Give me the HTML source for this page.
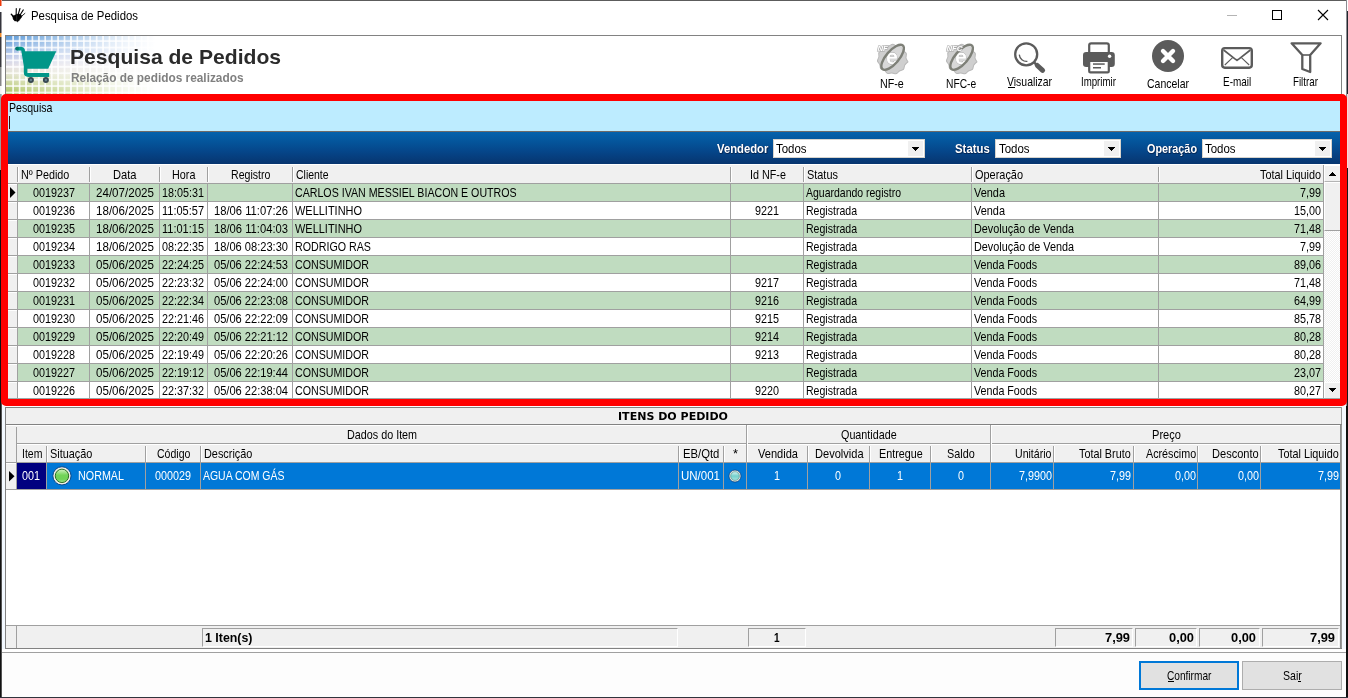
<!DOCTYPE html>
<html lang="pt-BR"><head><meta charset="utf-8"><title>Pesquisa de Pedidos</title>
<style>
html,body{margin:0;padding:0;background:#fff;overflow:hidden}
#w{position:relative;width:1348px;height:698px;overflow:hidden;font-family:"Liberation Sans",sans-serif}
#w>div,#w>span,#w>svg{position:absolute}
#tx{left:0;top:0;width:1348px;height:698px;will-change:transform}
#tx>span{position:absolute;white-space:pre;transform-origin:0 0;color:#000}
.t{font:13px/15px "Liberation Sans",sans-serif}
.tb{font:bold 13px/15px "Liberation Sans",sans-serif}
.tt{font:12px/15px "Liberation Sans",sans-serif}
.h1{font:bold 21px/24px "Liberation Sans",sans-serif}
.h2{font:bold 12px/14px "Liberation Sans",sans-serif}
.dj{font:bold 11px/13px "DejaVu Sans","Liberation Sans",sans-serif}
</style></head>
<body><div id="w">
<div style="left:0px;top:0px;width:1348px;height:698px;background:#ffffff;"></div>
<div style="left:0px;top:0px;width:1px;height:6px;background:#ee3a0c;"></div>
<div style="left:1px;top:0px;width:1px;height:6px;background:#f69c85;"></div>
<div style="left:0px;top:6px;width:1px;height:6px;background:#ffffff;"></div>
<div style="left:1px;top:6px;width:1px;height:6px;background:#ffffff;"></div>
<div style="left:0px;top:12px;width:1px;height:21px;background:#34343c;"></div>
<div style="left:1px;top:12px;width:1px;height:21px;background:#99999d;"></div>
<div style="left:0px;top:33px;width:1px;height:4px;background:#f08a28;"></div>
<div style="left:1px;top:33px;width:1px;height:4px;background:#f7c493;"></div>
<div style="left:0px;top:37px;width:1px;height:30px;background:#38383e;"></div>
<div style="left:1px;top:37px;width:1px;height:30px;background:#9b9b9e;"></div>
<div style="left:0px;top:67px;width:1px;height:19px;background:#868686;"></div>
<div style="left:1px;top:67px;width:1px;height:19px;background:#c2c2c2;"></div>
<div style="left:0px;top:86px;width:1px;height:8px;background:#f4f4f4;"></div>
<div style="left:1px;top:86px;width:1px;height:8px;background:#f9f9f9;"></div>
<div style="left:0px;top:94px;width:1px;height:76px;background:#9a9a9a;"></div>
<div style="left:1px;top:94px;width:1px;height:76px;background:#b6b6b6;"></div>
<div style="left:0px;top:170px;width:1px;height:528px;background:#111111;"></div>
<div style="left:1px;top:170px;width:1px;height:528px;background:#535353;"></div>
<div style="left:2px;top:0px;width:1345px;height:1px;background:#5c5c5c;"></div>
<div style="left:1346px;top:0px;width:1px;height:698px;background:#8c8c92;"></div>
<div style="left:1347px;top:0px;width:1px;height:11px;background:#ffffff;"></div>
<div style="left:1347px;top:11px;width:1px;height:83px;background:#23272e;"></div>
<div style="left:1347px;top:94px;width:1px;height:74px;background:#f4dada;"></div>
<div style="left:1347px;top:168px;width:1px;height:530px;background:#15171c;"></div>
<div style="left:1346px;top:406px;width:2px;height:292px;background:#101010;"></div>
<div style="left:0px;top:697px;width:1348px;height:1px;background:#30343c;"></div>
<div style="left:2px;top:406px;width:1344px;height:291px;background:#fdfdfd;"></div>
<div style="left:2px;top:406px;width:3px;height:243px;background:#f2f8ff;"></div>
<div style="left:1342px;top:406px;width:4px;height:243px;background:#f4f9ff;"></div>
<svg style="left:6px;top:4px" width="26" height="22" viewBox="6 4 26 22"><g fill="#000" stroke="#000" stroke-linecap="round">
<path d="M12.8 16.2 Q13.8 15.6 15.4 15 Q17 14.2 18.6 14.1 Q20 14 20.9 14.7 Q21.9 15.6 21.8 16.7 Q21.2 18 20.1 19 Q19.4 20.4 18.5 21.1 Q17.6 22 17 21.7 Q16.6 21.2 16.3 20.7 Q15.4 21.2 14.5 20.7 Q13.6 20 13.2 19 Q12.8 17.6 12.8 16.2Z" stroke-width=".5"/>
<path d="M13.6 16.8 L11.3 14.3" stroke-width="1.35" fill="none"/>
<path d="M16.15 15.2 L16.27 8.5" stroke-width="1.1" fill="none"/>
<path d="M18.1 14.6 L20 8.5" stroke-width="1.1" fill="none"/>
<path d="M20.2 14.8 L23.3 9.9" stroke-width="1.05" fill="none"/>
<path d="M21.4 16.4 L24.9 13.4" stroke-width=".85" fill="none"/>
</g><path d="M16.65 15.3 V20.4" stroke="#666" stroke-width=".35" fill="none"/></svg>
<div style="left:1227px;top:15px;width:10px;height:1px;background:#b4b4b4;"></div>
<div style="left:1272px;top:10px;width:10px;height:10px;background:transparent;box-sizing:border-box;border:1px solid #000"></div>
<svg style="left:1317px;top:9px" width="12" height="12" viewBox="0 0 12 12"><path d="M1 1 L11 11 M11 1 L1 11" stroke="#000" stroke-width="1.1" fill="none"/></svg>
<div style="left:5px;top:35px;width:1337px;height:61px;background:#ffffff;box-sizing:border-box;border:1px solid #828282"></div>
<div style="left:6px;top:36px;width:150px;height:58px;background:
linear-gradient(to right, rgba(255,255,255,0) 0%, rgba(255,255,255,.3) 25%, rgba(255,255,255,.62) 55%, rgba(255,255,255,.88) 80%, rgba(255,255,255,1) 100%),
repeating-linear-gradient(to right, rgba(255,255,255,0) 0px, rgba(255,255,255,0) 3.9px, rgba(255,255,255,.82) 4.7px, rgba(255,255,255,.82) 5.7px, rgba(255,255,255,0) 6.42px) 1.7px 0 no-repeat,
repeating-linear-gradient(to bottom, rgba(255,255,255,0) 0px, rgba(255,255,255,0) 3.9px, rgba(255,255,255,.82) 4.7px, rgba(255,255,255,.82) 5.7px, rgba(255,255,255,0) 6.42px) 0 -0.1px,
linear-gradient(to bottom, #5b9ad8 0%, #93b7e4 18%, #c3cdea 36%, #e6e1e6 52%, #e3e4cf 66%, #c6d392 84%, #a9c25c 100%);"></div>
<svg style="left:10px;top:42px" width="52" height="46" viewBox="10 42 52 46">
<path d="M17 48.6 H21.2 Q22.6 48.6 23 50 L25.6 66 V72.5 Q25.6 75 28.2 75 H49" fill="none" stroke="#009688" stroke-width="3.6" stroke-linejoin="round"/>
<path d="M22.6 51.2 H56.3 L48.2 68.8 H25.6 Z" fill="#009688"/>
<rect x="27.6" y="73" width="21.6" height="3.9" fill="#009688"/>
<circle cx="17" cy="48.6" r="1.9" fill="#00796b"/>
<circle cx="30.9" cy="80" r="3" fill="#37474f"/><circle cx="30.9" cy="80" r="1.2" fill="#607d8b"/>
<circle cx="45.9" cy="80" r="3" fill="#37474f"/><circle cx="45.9" cy="80" r="1.2" fill="#607d8b"/>
</svg>
<svg style="left:874px;top:42px;will-change:transform" width="36" height="36" viewBox="0 0 36 36">
<g transform="translate(18.4,17.2) rotate(10)">
<path d="M15.80 0.00 Q15.80 0.00 14.23 1.86 Q12.67 3.72 12.98 6.13 Q13.29 8.54 10.97 9.26 Q8.64 9.98 7.60 12.17 Q6.56 14.37 4.22 13.72 Q1.88 13.07 -0.19 14.35 Q-2.25 15.64 -3.87 13.82 Q-5.48 12.01 -7.92 11.97 Q-10.35 11.94 -10.73 9.54 Q-11.10 7.14 -13.13 5.79 Q-15.16 4.45 -14.18 2.23 Q-13.20 0.00 -14.18 -2.23 Q-15.16 -4.45 -13.13 -5.79 Q-11.10 -7.14 -10.73 -9.54 Q-10.35 -11.94 -7.92 -11.97 Q-5.48 -12.01 -3.87 -13.82 Q-2.25 -15.64 -0.19 -14.35 Q1.88 -13.07 4.22 -13.72 Q6.56 -14.37 7.60 -12.17 Q8.64 -9.98 10.97 -9.26 Q13.29 -8.54 12.98 -6.13 Q12.67 -3.72 14.23 -1.86Z" fill="#cfcfcf" stroke="#b9b9b9" stroke-width="1"/>
</g>
<ellipse cx="18.6" cy="15.3" rx="5.6" ry="14.8" transform="rotate(40.6 18.6 15.3)" fill="#dedede" opacity=".6"/>
<text x="12.5" y="21.9" font-family="Liberation Sans, sans-serif" font-size="20" fill="#ffffff" stroke="#a9a9a9" stroke-width="1.3" paint-order="stroke">e</text>
<text x="12.5" y="21.9" font-family="Liberation Sans, sans-serif" font-size="20" fill="#ffffff" stroke="#ffffff" stroke-width=".5">e</text>
<ellipse cx="18.6" cy="15.3" rx="6.4" ry="15.6" transform="rotate(40.6 18.6 15.3)" fill="none" stroke="#7e8078" stroke-width="2.4"/>
<text x="3.4" y="8.7" font-family="Liberation Sans, sans-serif" font-weight="bold" font-style="italic" font-size="7.8" fill="#ffffff" stroke="#a8a8a8" stroke-width="1.2" paint-order="stroke">NF</text>
</svg>
<svg style="left:943px;top:42px;will-change:transform" width="36" height="36" viewBox="0 0 36 36">
<g transform="translate(18.4,17.2) rotate(10)">
<path d="M15.80 0.00 Q15.80 0.00 14.23 1.86 Q12.67 3.72 12.98 6.13 Q13.29 8.54 10.97 9.26 Q8.64 9.98 7.60 12.17 Q6.56 14.37 4.22 13.72 Q1.88 13.07 -0.19 14.35 Q-2.25 15.64 -3.87 13.82 Q-5.48 12.01 -7.92 11.97 Q-10.35 11.94 -10.73 9.54 Q-11.10 7.14 -13.13 5.79 Q-15.16 4.45 -14.18 2.23 Q-13.20 0.00 -14.18 -2.23 Q-15.16 -4.45 -13.13 -5.79 Q-11.10 -7.14 -10.73 -9.54 Q-10.35 -11.94 -7.92 -11.97 Q-5.48 -12.01 -3.87 -13.82 Q-2.25 -15.64 -0.19 -14.35 Q1.88 -13.07 4.22 -13.72 Q6.56 -14.37 7.60 -12.17 Q8.64 -9.98 10.97 -9.26 Q13.29 -8.54 12.98 -6.13 Q12.67 -3.72 14.23 -1.86Z" fill="#cfcfcf" stroke="#b9b9b9" stroke-width="1"/>
</g>
<ellipse cx="18.6" cy="15.3" rx="5.6" ry="14.8" transform="rotate(40.6 18.6 15.3)" fill="#dedede" opacity=".6"/>
<text x="12.5" y="21.9" font-family="Liberation Sans, sans-serif" font-size="20" fill="#ffffff" stroke="#a9a9a9" stroke-width="1.3" paint-order="stroke">e</text>
<text x="12.5" y="21.9" font-family="Liberation Sans, sans-serif" font-size="20" fill="#ffffff" stroke="#ffffff" stroke-width=".5">e</text>
<ellipse cx="18.6" cy="15.3" rx="6.4" ry="15.6" transform="rotate(40.6 18.6 15.3)" fill="none" stroke="#7e8078" stroke-width="2.4"/>
<text x="3.4" y="8.7" font-family="Liberation Sans, sans-serif" font-weight="bold" font-style="italic" font-size="7.8" fill="#ffffff" stroke="#a8a8a8" stroke-width="1.2" paint-order="stroke">NFC</text>
</svg>
<svg style="left:1010px;top:38px" width="40" height="38" viewBox="1010 38 40 38">
<circle cx="1026.2" cy="54.3" r="11" fill="none" stroke="#5b5b5b" stroke-width="2.3"/>
<path d="M1019.3 54.6 A7.2 7.2 0 0 0 1027.4 61.3" fill="none" stroke="#5b5b5b" stroke-width="1.3"/>
<path d="M1034.3 62.6 L1036.6 64.9" stroke="#5b5b5b" stroke-width="2.6" fill="none"/>
<path d="M1037.3 65.5 L1042.6 70.3" stroke="#5b5b5b" stroke-width="5" stroke-linecap="round" fill="none"/>
</svg>
<div style="left:1008px;top:87px;width:7px;height:1px;background:#000;"></div>
<svg style="left:1080px;top:38px" width="38" height="38" viewBox="1080 38 38 38">
<rect x="1089.2" y="43.3" width="19.6" height="12" rx="2" fill="#fff" stroke="#5b5b5b" stroke-width="2.2"/>
<rect x="1083" y="52" width="31.8" height="15" rx="3.2" fill="#5b5b5b"/>
<rect x="1089.2" y="60.8" width="19.6" height="11.6" rx="1.2" fill="#fff" stroke="#5b5b5b" stroke-width="2.2"/>
<rect x="1093" y="63.3" width="11.7" height="1.5" fill="#5b5b5b"/><rect x="1093" y="67" width="8" height="1.5" fill="#5b5b5b"/>
<circle cx="1109.6" cy="56.2" r="1.7" fill="#fff"/>
</svg>
<svg style="left:1150px;top:38px" width="36" height="36" viewBox="1150 38 36 36">
<circle cx="1168" cy="56" r="16" fill="#5b5b5b"/>
<path d="M1163 51 L1173 61 M1173 51 L1163 61" stroke="#fff" stroke-width="4.4" stroke-linecap="round" fill="none"/>
</svg>
<svg style="left:1218px;top:44px" width="38" height="28" viewBox="1218 44 38 28">
<rect x="1222.2" y="48.1" width="29.6" height="19.6" rx="2.6" fill="#fff" stroke="#5b5b5b" stroke-width="2.4"/>
<path d="M1223.6 50 L1234.6 58.6 L1237 60.3 L1239.4 58.6 L1250.4 50" fill="none" stroke="#5b5b5b" stroke-width="1.7" stroke-linejoin="round"/>
<path d="M1224.8 65 L1232.6 57.6 M1249.2 65 L1241.4 57.6" fill="none" stroke="#5b5b5b" stroke-width="1.1"/>
</svg>
<svg style="left:1286px;top:38px" width="40" height="38" viewBox="1286 38 40 38">
<path d="M1291.6 43.3 H1320.6 L1310.2 55 V72 L1302.3 69 V55 Z" fill="#fff" stroke="#5b5b5b" stroke-width="2.3" stroke-linejoin="round"/>
<path d="M1302.3 55 H1310.2" stroke="#5b5b5b" stroke-width="1.6"/>
</svg>
<div style="left:8px;top:101px;width:1332px;height:30px;background:#bdecff;"></div>
<div style="left:9px;top:116px;width:1px;height:13px;background:#3a1010;"></div>
<div style="left:8px;top:131px;width:1332px;height:1px;background:#6e6a68;"></div>
<div style="left:8px;top:132px;width:1332px;height:32px;background:linear-gradient(to bottom,#0562ac 0%,#04559b 30%,#05468a 60%,#07356f 100%);"></div>
<div style="left:773px;top:139px;width:152px;height:19px;background:#ffffff;box-sizing:border-box;border:1px solid #d8d4cc"></div>
<div style="left:908px;top:141px;width:15px;height:15px;background:#f0f0f0;"></div>
<div style="left:912px;top:147px;width:7px;height:1px;background:#000;"></div>
<div style="left:913px;top:148px;width:5px;height:1px;background:#000;"></div>
<div style="left:914px;top:149px;width:3px;height:1px;background:#000;"></div>
<div style="left:915px;top:150px;width:1px;height:1px;background:#000;"></div>
<div style="left:995px;top:139px;width:126px;height:19px;background:#ffffff;box-sizing:border-box;border:1px solid #d8d4cc"></div>
<div style="left:1104px;top:141px;width:15px;height:15px;background:#f0f0f0;"></div>
<div style="left:1108px;top:147px;width:7px;height:1px;background:#000;"></div>
<div style="left:1109px;top:148px;width:5px;height:1px;background:#000;"></div>
<div style="left:1110px;top:149px;width:3px;height:1px;background:#000;"></div>
<div style="left:1111px;top:150px;width:1px;height:1px;background:#000;"></div>
<div style="left:1202px;top:139px;width:130px;height:19px;background:#ffffff;box-sizing:border-box;border:1px solid #d8d4cc"></div>
<div style="left:1315px;top:141px;width:15px;height:15px;background:#f0f0f0;"></div>
<div style="left:1319px;top:147px;width:7px;height:1px;background:#000;"></div>
<div style="left:1320px;top:148px;width:5px;height:1px;background:#000;"></div>
<div style="left:1321px;top:149px;width:3px;height:1px;background:#000;"></div>
<div style="left:1322px;top:150px;width:1px;height:1px;background:#000;"></div>
<div style="left:8px;top:164px;width:1332px;height:235px;background:#ffffff;"></div>
<div style="left:8px;top:164px;width:1316px;height:19px;background:#f0f0f0;"></div>
<div style="left:8px;top:164px;width:1316px;height:1px;background:#ffffff;"></div>
<div style="left:17px;top:167px;width:1px;height:15px;background:#a0a0a0;"></div>
<div style="left:18px;top:167px;width:1px;height:15px;background:#ffffff;"></div>
<div style="left:89px;top:167px;width:1px;height:15px;background:#a0a0a0;"></div>
<div style="left:90px;top:167px;width:1px;height:15px;background:#ffffff;"></div>
<div style="left:159px;top:167px;width:1px;height:15px;background:#a0a0a0;"></div>
<div style="left:160px;top:167px;width:1px;height:15px;background:#ffffff;"></div>
<div style="left:207px;top:167px;width:1px;height:15px;background:#a0a0a0;"></div>
<div style="left:208px;top:167px;width:1px;height:15px;background:#ffffff;"></div>
<div style="left:292px;top:167px;width:1px;height:15px;background:#a0a0a0;"></div>
<div style="left:293px;top:167px;width:1px;height:15px;background:#ffffff;"></div>
<div style="left:730px;top:167px;width:1px;height:15px;background:#a0a0a0;"></div>
<div style="left:731px;top:167px;width:1px;height:15px;background:#ffffff;"></div>
<div style="left:803px;top:167px;width:1px;height:15px;background:#a0a0a0;"></div>
<div style="left:804px;top:167px;width:1px;height:15px;background:#ffffff;"></div>
<div style="left:971px;top:167px;width:1px;height:15px;background:#a0a0a0;"></div>
<div style="left:972px;top:167px;width:1px;height:15px;background:#ffffff;"></div>
<div style="left:1158px;top:167px;width:1px;height:15px;background:#a0a0a0;"></div>
<div style="left:1159px;top:167px;width:1px;height:15px;background:#ffffff;"></div>
<div style="left:1323px;top:165px;width:1px;height:18px;background:#a0a0a0;"></div>
<div style="left:8px;top:183px;width:1316px;height:1px;background:#a0a0a0;"></div>
<div style="left:8px;top:184px;width:9px;height:17px;background:#f0f0f0;"></div>
<div style="left:8px;top:184px;width:9px;height:1px;background:#ffffff;"></div>
<div style="left:18px;top:184px;width:1305px;height:17px;background:#c0dcc0;"></div>
<div style="left:8px;top:201px;width:1316px;height:1px;background:#a0a0a0;"></div>
<div style="left:8px;top:202px;width:9px;height:17px;background:#f0f0f0;"></div>
<div style="left:8px;top:202px;width:9px;height:1px;background:#ffffff;"></div>
<div style="left:8px;top:219px;width:1316px;height:1px;background:#a0a0a0;"></div>
<div style="left:8px;top:220px;width:9px;height:17px;background:#f0f0f0;"></div>
<div style="left:8px;top:220px;width:9px;height:1px;background:#ffffff;"></div>
<div style="left:18px;top:220px;width:1305px;height:17px;background:#c0dcc0;"></div>
<div style="left:8px;top:237px;width:1316px;height:1px;background:#a0a0a0;"></div>
<div style="left:8px;top:238px;width:9px;height:17px;background:#f0f0f0;"></div>
<div style="left:8px;top:238px;width:9px;height:1px;background:#ffffff;"></div>
<div style="left:8px;top:255px;width:1316px;height:1px;background:#a0a0a0;"></div>
<div style="left:8px;top:256px;width:9px;height:17px;background:#f0f0f0;"></div>
<div style="left:8px;top:256px;width:9px;height:1px;background:#ffffff;"></div>
<div style="left:18px;top:256px;width:1305px;height:17px;background:#c0dcc0;"></div>
<div style="left:8px;top:273px;width:1316px;height:1px;background:#a0a0a0;"></div>
<div style="left:8px;top:274px;width:9px;height:17px;background:#f0f0f0;"></div>
<div style="left:8px;top:274px;width:9px;height:1px;background:#ffffff;"></div>
<div style="left:8px;top:291px;width:1316px;height:1px;background:#a0a0a0;"></div>
<div style="left:8px;top:292px;width:9px;height:17px;background:#f0f0f0;"></div>
<div style="left:8px;top:292px;width:9px;height:1px;background:#ffffff;"></div>
<div style="left:18px;top:292px;width:1305px;height:17px;background:#c0dcc0;"></div>
<div style="left:8px;top:309px;width:1316px;height:1px;background:#a0a0a0;"></div>
<div style="left:8px;top:310px;width:9px;height:17px;background:#f0f0f0;"></div>
<div style="left:8px;top:310px;width:9px;height:1px;background:#ffffff;"></div>
<div style="left:8px;top:327px;width:1316px;height:1px;background:#a0a0a0;"></div>
<div style="left:8px;top:328px;width:9px;height:17px;background:#f0f0f0;"></div>
<div style="left:8px;top:328px;width:9px;height:1px;background:#ffffff;"></div>
<div style="left:18px;top:328px;width:1305px;height:17px;background:#c0dcc0;"></div>
<div style="left:8px;top:345px;width:1316px;height:1px;background:#a0a0a0;"></div>
<div style="left:8px;top:346px;width:9px;height:17px;background:#f0f0f0;"></div>
<div style="left:8px;top:346px;width:9px;height:1px;background:#ffffff;"></div>
<div style="left:8px;top:363px;width:1316px;height:1px;background:#a0a0a0;"></div>
<div style="left:8px;top:364px;width:9px;height:17px;background:#f0f0f0;"></div>
<div style="left:8px;top:364px;width:9px;height:1px;background:#ffffff;"></div>
<div style="left:18px;top:364px;width:1305px;height:17px;background:#c0dcc0;"></div>
<div style="left:8px;top:381px;width:1316px;height:1px;background:#a0a0a0;"></div>
<div style="left:8px;top:382px;width:9px;height:17px;background:#f0f0f0;"></div>
<div style="left:8px;top:382px;width:9px;height:1px;background:#ffffff;"></div>
<div style="left:8px;top:399px;width:1316px;height:1px;background:#a0a0a0;"></div>
<div style="left:17px;top:184px;width:1px;height:215px;background:#a0a0a0;"></div>
<div style="left:89px;top:184px;width:1px;height:215px;background:#a0a0a0;"></div>
<div style="left:159px;top:184px;width:1px;height:215px;background:#a0a0a0;"></div>
<div style="left:207px;top:184px;width:1px;height:215px;background:#a0a0a0;"></div>
<div style="left:292px;top:184px;width:1px;height:215px;background:#a0a0a0;"></div>
<div style="left:730px;top:184px;width:1px;height:215px;background:#a0a0a0;"></div>
<div style="left:803px;top:184px;width:1px;height:215px;background:#a0a0a0;"></div>
<div style="left:971px;top:184px;width:1px;height:215px;background:#a0a0a0;"></div>
<div style="left:1158px;top:184px;width:1px;height:215px;background:#a0a0a0;"></div>
<div style="left:1323px;top:184px;width:1px;height:215px;background:#a0a0a0;"></div>
<svg style="left:10px;top:187px" width="6" height="11" viewBox="0 0 6 11"><path d="M0 0 L5.5 5.5 L0 11Z" fill="#000"/></svg>
<div style="left:1324px;top:165px;width:16px;height:234px;background:repeating-conic-gradient(#ffffff 0 25%, #f0f0f0 0 50%) 0 0/2px 2px;"></div>
<div style="left:1324px;top:165px;width:16px;height:17px;background:#f0f0f0;box-sizing:border-box;border-left:1px solid #fff;border-top:1px solid #fff;border-bottom:1px solid #b4b4b4"></div>
<div style="left:1332px;top:172px;width:1px;height:1px;background:#000;"></div>
<div style="left:1331px;top:173px;width:3px;height:1px;background:#000;"></div>
<div style="left:1330px;top:174px;width:5px;height:1px;background:#000;"></div>
<div style="left:1329px;top:175px;width:7px;height:1px;background:#000;"></div>
<div style="left:1324px;top:182px;width:16px;height:49px;background:#f0f0f0;box-sizing:border-box;border-left:1px solid #fff;border-top:1px solid #fff;border-bottom:1px solid #a0a0a0"></div>
<div style="left:1324px;top:382px;width:16px;height:17px;background:#f0f0f0;box-sizing:border-box;border-left:1px solid #fff;border-top:1px solid #fff"></div>
<div style="left:1329px;top:388px;width:7px;height:1px;background:#000;"></div>
<div style="left:1330px;top:389px;width:5px;height:1px;background:#000;"></div>
<div style="left:1331px;top:390px;width:3px;height:1px;background:#000;"></div>
<div style="left:1332px;top:391px;width:1px;height:1px;background:#000;"></div>
<div style="left:8px;top:398px;width:1332px;height:1px;background:#9aa8a8;"></div>
<div style="left:1px;top:94px;width:1346px;height:312px;background:transparent;box-sizing:border-box;border:7px solid #ff0000;border-radius:5px"></div>
<div style="left:5px;top:407px;width:1337px;height:246px;background:#f0f0f0;"></div>
<div style="left:5px;top:407px;width:1337px;height:1px;background:#828282;"></div>
<div style="left:5px;top:407px;width:1px;height:242px;background:#828282;"></div>
<div style="left:1341px;top:407px;width:1px;height:242px;background:#9a9a9a;"></div>
<div style="left:5px;top:424px;width:1337px;height:1px;background:#828282;"></div>
<div style="left:6px;top:425px;width:1334px;height:200px;background:#ffffff;"></div>
<div style="left:6px;top:425px;width:1334px;height:37px;background:#f0f0f0;"></div>
<div style="left:6px;top:425px;width:1334px;height:1px;background:#ffffff;"></div>
<div style="left:1340px;top:425px;width:1px;height:224px;background:#8a8a8a;"></div>
<div style="left:16px;top:427px;width:1px;height:35px;background:#a0a0a0;"></div>
<div style="left:17px;top:443px;width:1323px;height:1px;background:#a0a0a0;"></div>
<div style="left:17px;top:444px;width:1323px;height:1px;background:#ffffff;"></div>
<div style="left:6px;top:462px;width:1334px;height:1px;background:#a0a0a0;"></div>
<div style="left:746px;top:425px;width:1px;height:38px;background:#a0a0a0;"></div>
<div style="left:747px;top:426px;width:1px;height:36px;background:#ffffff;"></div>
<div style="left:990px;top:425px;width:1px;height:38px;background:#a0a0a0;"></div>
<div style="left:991px;top:426px;width:1px;height:36px;background:#ffffff;"></div>
<div style="left:46px;top:446px;width:1px;height:16px;background:#a0a0a0;"></div>
<div style="left:47px;top:446px;width:1px;height:16px;background:#ffffff;"></div>
<div style="left:145px;top:446px;width:1px;height:16px;background:#a0a0a0;"></div>
<div style="left:146px;top:446px;width:1px;height:16px;background:#ffffff;"></div>
<div style="left:200px;top:446px;width:1px;height:16px;background:#a0a0a0;"></div>
<div style="left:201px;top:446px;width:1px;height:16px;background:#ffffff;"></div>
<div style="left:678px;top:446px;width:1px;height:16px;background:#a0a0a0;"></div>
<div style="left:679px;top:446px;width:1px;height:16px;background:#ffffff;"></div>
<div style="left:723px;top:446px;width:1px;height:16px;background:#a0a0a0;"></div>
<div style="left:724px;top:446px;width:1px;height:16px;background:#ffffff;"></div>
<div style="left:807px;top:446px;width:1px;height:16px;background:#a0a0a0;"></div>
<div style="left:808px;top:446px;width:1px;height:16px;background:#ffffff;"></div>
<div style="left:869px;top:446px;width:1px;height:16px;background:#a0a0a0;"></div>
<div style="left:870px;top:446px;width:1px;height:16px;background:#ffffff;"></div>
<div style="left:930px;top:446px;width:1px;height:16px;background:#a0a0a0;"></div>
<div style="left:931px;top:446px;width:1px;height:16px;background:#ffffff;"></div>
<div style="left:1053px;top:446px;width:1px;height:16px;background:#a0a0a0;"></div>
<div style="left:1054px;top:446px;width:1px;height:16px;background:#ffffff;"></div>
<div style="left:1133px;top:446px;width:1px;height:16px;background:#a0a0a0;"></div>
<div style="left:1134px;top:446px;width:1px;height:16px;background:#ffffff;"></div>
<div style="left:1197px;top:446px;width:1px;height:16px;background:#a0a0a0;"></div>
<div style="left:1198px;top:446px;width:1px;height:16px;background:#ffffff;"></div>
<div style="left:1260px;top:446px;width:1px;height:16px;background:#a0a0a0;"></div>
<div style="left:1261px;top:446px;width:1px;height:16px;background:#ffffff;"></div>
<div style="left:6px;top:463px;width:10px;height:26px;background:#f0f0f0;"></div>
<div style="left:6px;top:463px;width:10px;height:1px;background:#fff;"></div>
<div style="left:17px;top:463px;width:1323px;height:26px;background:#0078d7;"></div>
<div style="left:17px;top:463px;width:29px;height:26px;background:#000080;"></div>
<div style="left:6px;top:489px;width:1334px;height:1px;background:#a0a0a0;"></div>
<div style="left:16px;top:463px;width:1px;height:27px;background:#a0a0a0;"></div>
<div style="left:46px;top:463px;width:1px;height:27px;background:#a0a0a0;"></div>
<div style="left:145px;top:463px;width:1px;height:27px;background:#a0a0a0;"></div>
<div style="left:200px;top:463px;width:1px;height:27px;background:#a0a0a0;"></div>
<div style="left:678px;top:463px;width:1px;height:27px;background:#a0a0a0;"></div>
<div style="left:723px;top:463px;width:1px;height:27px;background:#a0a0a0;"></div>
<div style="left:746px;top:463px;width:1px;height:27px;background:#a0a0a0;"></div>
<div style="left:807px;top:463px;width:1px;height:27px;background:#a0a0a0;"></div>
<div style="left:869px;top:463px;width:1px;height:27px;background:#a0a0a0;"></div>
<div style="left:930px;top:463px;width:1px;height:27px;background:#a0a0a0;"></div>
<div style="left:990px;top:463px;width:1px;height:27px;background:#a0a0a0;"></div>
<div style="left:1053px;top:463px;width:1px;height:27px;background:#a0a0a0;"></div>
<div style="left:1133px;top:463px;width:1px;height:27px;background:#a0a0a0;"></div>
<div style="left:1197px;top:463px;width:1px;height:27px;background:#a0a0a0;"></div>
<div style="left:1260px;top:463px;width:1px;height:27px;background:#a0a0a0;"></div>
<svg style="left:9px;top:471px" width="6" height="11" viewBox="0 0 6 11"><path d="M0 0 L5.5 5.3 L0 10.6Z" fill="#000"/></svg>
<svg style="left:52px;top:466px" width="20" height="20" viewBox="0 0 20 20"><defs>
<linearGradient id="gg" x1="0" y1="0" x2="0" y2="1"><stop offset="0" stop-color="#d2f2c4"/><stop offset=".45" stop-color="#72d458"/><stop offset=".75" stop-color="#6fd256"/><stop offset="1" stop-color="#a4e690"/></linearGradient></defs>
<circle cx="9.95" cy="9.85" r="9.1" fill="#efeee8" stroke="#083f80" stroke-width=".9"/><circle cx="9.95" cy="9.85" r="6.7" fill="url(#gg)" stroke="#2b6f20" stroke-width="1"/></svg>
<svg style="left:728px;top:469px" width="14" height="14" viewBox="0 0 14 14"><defs>
<linearGradient id="tg" x1="0" y1="0" x2="0" y2="1"><stop offset="0" stop-color="#d8f6f4"/><stop offset=".5" stop-color="#74d0cc"/><stop offset="1" stop-color="#a6e4e0"/></linearGradient></defs>
<circle cx="7" cy="7.05" r="6.05" fill="#dcdcd4" stroke="#083f80" stroke-width=".7"/><circle cx="7" cy="7.05" r="4.3" fill="url(#tg)" stroke="#5a9c98" stroke-width=".7"/></svg>
<div style="left:6px;top:625px;width:1334px;height:1px;background:#a0a0a0;"></div>
<div style="left:6px;top:626px;width:1334px;height:22px;background:#f0f0f0;"></div>
<div style="left:16px;top:626px;width:1px;height:22px;background:#a0a0a0;"></div>
<div style="left:5px;top:648px;width:1337px;height:1px;background:#828282;"></div>
<div style="left:202px;top:628px;width:476px;height:19px;background:transparent;box-sizing:border-box;border:1px solid #a0a0a0;border-right-color:#fff;border-bottom-color:#fff"></div>
<div style="left:748px;top:628px;width:58px;height:19px;background:transparent;box-sizing:border-box;border:1px solid #a0a0a0;border-right-color:#fff;border-bottom-color:#fff"></div>
<div style="left:1055px;top:628px;width:78px;height:19px;background:transparent;box-sizing:border-box;border:1px solid #a0a0a0;border-right-color:#fff;border-bottom-color:#fff"></div>
<div style="left:1135px;top:628px;width:62px;height:19px;background:transparent;box-sizing:border-box;border:1px solid #a0a0a0;border-right-color:#fff;border-bottom-color:#fff"></div>
<div style="left:1199px;top:628px;width:61px;height:19px;background:transparent;box-sizing:border-box;border:1px solid #a0a0a0;border-right-color:#fff;border-bottom-color:#fff"></div>
<div style="left:1262px;top:628px;width:77px;height:19px;background:transparent;box-sizing:border-box;border:1px solid #a0a0a0;border-right-color:#fff;border-bottom-color:#fff"></div>
<div style="left:2px;top:649px;width:1344px;height:3px;background:#ffffff;"></div>
<div style="left:2px;top:652px;width:1344px;height:1px;background:#a0a0a0;"></div>
<div style="left:1139px;top:661px;width:100px;height:29px;background:#e1e1e1;box-sizing:border-box;border:2px solid #0078d7"></div>
<div style="left:1242px;top:661px;width:100px;height:29px;background:#e1e1e1;box-sizing:border-box;border:1px solid #adadad"></div>
<div style="left:1168px;top:681px;width:6px;height:1px;background:#000;"></div>
<div style="left:1298px;top:681px;width:3px;height:1px;background:#000;"></div>
<div id="tx">
<span class="tt" style="left:31.30px;top:9px;transform:scaleX(0.9490);">Pesquisa de Pedidos</span>
<span class="h1" style="left:70.00px;top:45px;transform:scaleX(1.0044);color:#2b2b2b;">Pesquisa de Pedidos</span>
<span class="h2" style="left:70.70px;top:71px;transform:scaleX(0.9873);color:#808080;">Relação de pedidos realizados</span>
<span class="t" style="left:880.00px;top:76px;transform:scaleX(0.8239);">NF-e</span>
<span class="t" style="left:946.30px;top:76px;transform:scaleX(0.7890);">NFC-e</span>
<span class="t" style="left:1007.40px;top:74px;transform:scaleX(0.8036);">Visualizar</span>
<span class="t" style="left:1081.40px;top:74px;transform:scaleX(0.7436);">Imprimir</span>
<span class="t" style="left:1147.40px;top:76px;transform:scaleX(0.8073);">Cancelar</span>
<span class="t" style="left:1223.30px;top:74px;transform:scaleX(0.7656);">E-mail</span>
<span class="t" style="left:1293.40px;top:74px;transform:scaleX(0.7496);">Filtrar</span>
<span class="t" style="left:9.30px;top:100px;transform:scaleX(0.8134);">Pesquisa</span>
<span class="tb" style="left:716.80px;top:141px;transform:scaleX(0.8677);color:#fff;text-shadow:1px 1px 0 #032a5c,0 1px 0 #032a5c,1px 0 0 #032a5c;">Vendedor</span>
<span class="t" style="left:776.40px;top:141px;transform:scaleX(0.8821);">Todos</span>
<span class="tb" style="left:955.20px;top:141px;transform:scaleX(0.8759);color:#fff;text-shadow:1px 1px 0 #032a5c,0 1px 0 #032a5c,1px 0 0 #032a5c;">Status</span>
<span class="t" style="left:998.70px;top:141px;transform:scaleX(0.8821);">Todos</span>
<span class="tb" style="left:1147.00px;top:141px;transform:scaleX(0.8337);color:#fff;text-shadow:1px 1px 0 #032a5c,0 1px 0 #032a5c,1px 0 0 #032a5c;">Operação</span>
<span class="t" style="left:1205.40px;top:141px;transform:scaleX(0.8821);">Todos</span>
<span class="t" style="left:21.30px;top:167px;transform:scaleX(0.8295);">Nº Pedido</span>
<span class="t" style="left:113.20px;top:167px;transform:scaleX(0.8558);">Data</span>
<span class="t" style="left:172.10px;top:167px;transform:scaleX(0.8305);">Hora</span>
<span class="t" style="left:231.00px;top:167px;transform:scaleX(0.8139);">Registro</span>
<span class="t" style="left:296.20px;top:167px;transform:scaleX(0.8056);">Cliente</span>
<span class="t" style="left:749.80px;top:167px;transform:scaleX(0.8283);">Id NF-e</span>
<span class="t" style="left:806.70px;top:167px;transform:scaleX(0.8384);">Status</span>
<span class="t" style="left:974.80px;top:167px;transform:scaleX(0.8408);">Operação</span>
<span class="t" style="left:1260.20px;top:167px;transform:scaleX(0.8356);">Total Liquido</span>
<span class="t" style="left:32.50px;top:185px;transform:scaleX(0.8299);">0019237</span>
<span class="t" style="left:95.50px;top:185px;transform:scaleX(0.8914);">24/07/2025</span>
<span class="t" style="left:162.00px;top:185px;transform:scaleX(0.8300);">18:05:31</span>
<span class="t" style="left:295.40px;top:185px;transform:scaleX(0.8181);">CARLOS IVAN MESSIEL BIACON E OUTROS</span>
<span class="t" style="left:806.00px;top:185px;transform:scaleX(0.8065);">Aguardando registro</span>
<span class="t" style="left:973.80px;top:185px;transform:scaleX(0.8407);">Venda</span>
<span class="t" style="left:1300.10px;top:185px;transform:scaleX(0.8300);">7,99</span>
<span class="t" style="left:32.50px;top:203px;transform:scaleX(0.8299);">0019236</span>
<span class="t" style="left:95.50px;top:203px;transform:scaleX(0.8914);">18/06/2025</span>
<span class="t" style="left:162.00px;top:203px;transform:scaleX(0.8461);">11:05:57</span>
<span class="t" style="left:213.50px;top:203px;transform:scaleX(0.8626);">18/06 11:07:26</span>
<span class="t" style="left:295.40px;top:203px;transform:scaleX(0.8433);">WELLITINHO</span>
<span class="t" style="left:754.80px;top:203px;transform:scaleX(0.8299);">9221</span>
<span class="t" style="left:806.00px;top:203px;transform:scaleX(0.8112);">Registrada</span>
<span class="t" style="left:973.80px;top:203px;transform:scaleX(0.8407);">Venda</span>
<span class="t" style="left:1294.10px;top:203px;transform:scaleX(0.8300);">15,00</span>
<span class="t" style="left:32.50px;top:221px;transform:scaleX(0.8299);">0019235</span>
<span class="t" style="left:95.50px;top:221px;transform:scaleX(0.8914);">18/06/2025</span>
<span class="t" style="left:162.00px;top:221px;transform:scaleX(0.8461);">11:01:15</span>
<span class="t" style="left:213.50px;top:221px;transform:scaleX(0.8626);">18/06 11:04:03</span>
<span class="t" style="left:295.40px;top:221px;transform:scaleX(0.8433);">WELLITINHO</span>
<span class="t" style="left:806.00px;top:221px;transform:scaleX(0.8112);">Registrada</span>
<span class="t" style="left:973.80px;top:221px;transform:scaleX(0.8334);">Devolução de Venda</span>
<span class="t" style="left:1294.10px;top:221px;transform:scaleX(0.8300);">71,48</span>
<span class="t" style="left:32.50px;top:239px;transform:scaleX(0.8299);">0019234</span>
<span class="t" style="left:95.50px;top:239px;transform:scaleX(0.8914);">18/06/2025</span>
<span class="t" style="left:162.00px;top:239px;transform:scaleX(0.8300);">08:22:35</span>
<span class="t" style="left:213.50px;top:239px;transform:scaleX(0.8531);">18/06 08:23:30</span>
<span class="t" style="left:295.40px;top:239px;transform:scaleX(0.8220);">RODRIGO RAS</span>
<span class="t" style="left:806.00px;top:239px;transform:scaleX(0.8112);">Registrada</span>
<span class="t" style="left:973.80px;top:239px;transform:scaleX(0.8334);">Devolução de Venda</span>
<span class="t" style="left:1300.10px;top:239px;transform:scaleX(0.8300);">7,99</span>
<span class="t" style="left:32.50px;top:257px;transform:scaleX(0.8299);">0019233</span>
<span class="t" style="left:95.50px;top:257px;transform:scaleX(0.8914);">05/06/2025</span>
<span class="t" style="left:162.00px;top:257px;transform:scaleX(0.8300);">22:24:25</span>
<span class="t" style="left:213.50px;top:257px;transform:scaleX(0.8531);">05/06 22:24:53</span>
<span class="t" style="left:295.40px;top:257px;transform:scaleX(0.8197);">CONSUMIDOR</span>
<span class="t" style="left:806.00px;top:257px;transform:scaleX(0.8112);">Registrada</span>
<span class="t" style="left:973.80px;top:257px;transform:scaleX(0.8223);">Venda Foods</span>
<span class="t" style="left:1294.10px;top:257px;transform:scaleX(0.8300);">89,06</span>
<span class="t" style="left:32.50px;top:275px;transform:scaleX(0.8299);">0019232</span>
<span class="t" style="left:95.50px;top:275px;transform:scaleX(0.8914);">05/06/2025</span>
<span class="t" style="left:162.00px;top:275px;transform:scaleX(0.8300);">22:23:32</span>
<span class="t" style="left:213.50px;top:275px;transform:scaleX(0.8531);">05/06 22:24:00</span>
<span class="t" style="left:295.40px;top:275px;transform:scaleX(0.8197);">CONSUMIDOR</span>
<span class="t" style="left:754.80px;top:275px;transform:scaleX(0.8299);">9217</span>
<span class="t" style="left:806.00px;top:275px;transform:scaleX(0.8112);">Registrada</span>
<span class="t" style="left:973.80px;top:275px;transform:scaleX(0.8223);">Venda Foods</span>
<span class="t" style="left:1294.10px;top:275px;transform:scaleX(0.8300);">71,48</span>
<span class="t" style="left:32.50px;top:293px;transform:scaleX(0.8299);">0019231</span>
<span class="t" style="left:95.50px;top:293px;transform:scaleX(0.8914);">05/06/2025</span>
<span class="t" style="left:162.00px;top:293px;transform:scaleX(0.8300);">22:22:34</span>
<span class="t" style="left:213.50px;top:293px;transform:scaleX(0.8531);">05/06 22:23:08</span>
<span class="t" style="left:295.40px;top:293px;transform:scaleX(0.8197);">CONSUMIDOR</span>
<span class="t" style="left:754.80px;top:293px;transform:scaleX(0.8299);">9216</span>
<span class="t" style="left:806.00px;top:293px;transform:scaleX(0.8112);">Registrada</span>
<span class="t" style="left:973.80px;top:293px;transform:scaleX(0.8223);">Venda Foods</span>
<span class="t" style="left:1294.10px;top:293px;transform:scaleX(0.8300);">64,99</span>
<span class="t" style="left:32.50px;top:311px;transform:scaleX(0.8299);">0019230</span>
<span class="t" style="left:95.50px;top:311px;transform:scaleX(0.8914);">05/06/2025</span>
<span class="t" style="left:162.00px;top:311px;transform:scaleX(0.8300);">22:21:46</span>
<span class="t" style="left:213.50px;top:311px;transform:scaleX(0.8531);">05/06 22:22:09</span>
<span class="t" style="left:295.40px;top:311px;transform:scaleX(0.8197);">CONSUMIDOR</span>
<span class="t" style="left:754.80px;top:311px;transform:scaleX(0.8299);">9215</span>
<span class="t" style="left:806.00px;top:311px;transform:scaleX(0.8112);">Registrada</span>
<span class="t" style="left:973.80px;top:311px;transform:scaleX(0.8223);">Venda Foods</span>
<span class="t" style="left:1294.10px;top:311px;transform:scaleX(0.8300);">85,78</span>
<span class="t" style="left:32.50px;top:329px;transform:scaleX(0.8299);">0019229</span>
<span class="t" style="left:95.50px;top:329px;transform:scaleX(0.8914);">05/06/2025</span>
<span class="t" style="left:162.00px;top:329px;transform:scaleX(0.8300);">22:20:49</span>
<span class="t" style="left:213.50px;top:329px;transform:scaleX(0.8531);">05/06 22:21:12</span>
<span class="t" style="left:295.40px;top:329px;transform:scaleX(0.8197);">CONSUMIDOR</span>
<span class="t" style="left:754.80px;top:329px;transform:scaleX(0.8299);">9214</span>
<span class="t" style="left:806.00px;top:329px;transform:scaleX(0.8112);">Registrada</span>
<span class="t" style="left:973.80px;top:329px;transform:scaleX(0.8223);">Venda Foods</span>
<span class="t" style="left:1294.10px;top:329px;transform:scaleX(0.8300);">80,28</span>
<span class="t" style="left:32.50px;top:347px;transform:scaleX(0.8299);">0019228</span>
<span class="t" style="left:95.50px;top:347px;transform:scaleX(0.8914);">05/06/2025</span>
<span class="t" style="left:162.00px;top:347px;transform:scaleX(0.8300);">22:19:49</span>
<span class="t" style="left:213.50px;top:347px;transform:scaleX(0.8531);">05/06 22:20:26</span>
<span class="t" style="left:295.40px;top:347px;transform:scaleX(0.8197);">CONSUMIDOR</span>
<span class="t" style="left:754.80px;top:347px;transform:scaleX(0.8299);">9213</span>
<span class="t" style="left:806.00px;top:347px;transform:scaleX(0.8112);">Registrada</span>
<span class="t" style="left:973.80px;top:347px;transform:scaleX(0.8223);">Venda Foods</span>
<span class="t" style="left:1294.10px;top:347px;transform:scaleX(0.8300);">80,28</span>
<span class="t" style="left:32.50px;top:365px;transform:scaleX(0.8299);">0019227</span>
<span class="t" style="left:95.50px;top:365px;transform:scaleX(0.8914);">05/06/2025</span>
<span class="t" style="left:162.00px;top:365px;transform:scaleX(0.8300);">22:19:12</span>
<span class="t" style="left:213.50px;top:365px;transform:scaleX(0.8531);">05/06 22:19:44</span>
<span class="t" style="left:295.40px;top:365px;transform:scaleX(0.8197);">CONSUMIDOR</span>
<span class="t" style="left:806.00px;top:365px;transform:scaleX(0.8112);">Registrada</span>
<span class="t" style="left:973.80px;top:365px;transform:scaleX(0.8223);">Venda Foods</span>
<span class="t" style="left:1294.10px;top:365px;transform:scaleX(0.8300);">23,07</span>
<span class="t" style="left:32.50px;top:383px;transform:scaleX(0.8299);">0019226</span>
<span class="t" style="left:95.50px;top:383px;transform:scaleX(0.8914);">05/06/2025</span>
<span class="t" style="left:162.00px;top:383px;transform:scaleX(0.8300);">22:37:32</span>
<span class="t" style="left:213.50px;top:383px;transform:scaleX(0.8531);">05/06 22:38:04</span>
<span class="t" style="left:295.40px;top:383px;transform:scaleX(0.8197);">CONSUMIDOR</span>
<span class="t" style="left:754.80px;top:383px;transform:scaleX(0.8299);">9220</span>
<span class="t" style="left:806.00px;top:383px;transform:scaleX(0.8112);">Registrada</span>
<span class="t" style="left:973.80px;top:383px;transform:scaleX(0.8223);">Venda Foods</span>
<span class="t" style="left:1294.10px;top:383px;transform:scaleX(0.8300);">80,27</span>
<span class="dj" style="left:617.80px;top:410px;transform:scaleX(1.0031);">ITENS DO PEDIDO</span>
<span class="t" style="left:346.60px;top:427px;transform:scaleX(0.8291);">Dados do Item</span>
<span class="t" style="left:841.00px;top:427px;transform:scaleX(0.8286);">Quantidade</span>
<span class="t" style="left:1152.10px;top:427px;transform:scaleX(0.8510);">Preço</span>
<span class="t" style="left:22.10px;top:446px;transform:scaleX(0.8069);">Item</span>
<span class="t" style="left:50.30px;top:446px;transform:scaleX(0.8381);">Situação</span>
<span class="t" style="left:156.90px;top:446px;transform:scaleX(0.8108);">Código</span>
<span class="t" style="left:204.20px;top:446px;transform:scaleX(0.8374);">Descrição</span>
<span class="t" style="left:683.10px;top:446px;transform:scaleX(0.8686);">EB/Qtd</span>
<span class="t" style="left:732.50px;top:446px;transform:scaleX(0.9883);">*</span>
<span class="t" style="left:757.50px;top:446px;transform:scaleX(0.8512);">Vendida</span>
<span class="t" style="left:814.90px;top:446px;transform:scaleX(0.8514);">Devolvida</span>
<span class="t" style="left:879.10px;top:446px;transform:scaleX(0.8283);">Entregue</span>
<span class="t" style="left:947.10px;top:446px;transform:scaleX(0.8331);">Saldo</span>
<span class="t" style="left:1015.20px;top:446px;transform:scaleX(0.8126);">Unitário</span>
<span class="t" style="left:1079.40px;top:446px;transform:scaleX(0.8319);">Total Bruto</span>
<span class="t" style="left:1145.50px;top:446px;transform:scaleX(0.8257);">Acréscimo</span>
<span class="t" style="left:1212.10px;top:446px;transform:scaleX(0.8503);">Desconto</span>
<span class="t" style="left:1277.70px;top:446px;transform:scaleX(0.8329);">Total Liquido</span>
<span class="t" style="left:22.10px;top:468px;transform:scaleX(0.8299);color:#ffffff;">001</span>
<span class="t" style="left:78.00px;top:468px;transform:scaleX(0.8271);color:#ffffff;">NORMAL</span>
<span class="t" style="left:155.20px;top:468px;transform:scaleX(0.8299);color:#ffffff;">000029</span>
<span class="t" style="left:202.60px;top:468px;transform:scaleX(0.8051);color:#ffffff;">AGUA COM GÁS</span>
<span class="t" style="left:681.10px;top:468px;transform:scaleX(0.8848);color:#ffffff;">UN/001</span>
<span class="t" style="left:774.20px;top:468px;transform:scaleX(0.8299);color:#ffffff;">1</span>
<span class="t" style="left:835.30px;top:468px;transform:scaleX(0.8299);color:#ffffff;">0</span>
<span class="t" style="left:896.50px;top:468px;transform:scaleX(0.8299);color:#ffffff;">1</span>
<span class="t" style="left:957.50px;top:468px;transform:scaleX(0.8299);color:#ffffff;">0</span>
<span class="t" style="left:1018.60px;top:468px;transform:scaleX(0.8299);color:#ffffff;">7,9900</span>
<span class="t" style="left:1110.10px;top:468px;transform:scaleX(0.8300);color:#ffffff;">7,99</span>
<span class="t" style="left:1174.60px;top:468px;transform:scaleX(0.8300);color:#ffffff;">0,00</span>
<span class="t" style="left:1237.80px;top:468px;transform:scaleX(0.8300);color:#ffffff;">0,00</span>
<span class="t" style="left:1317.50px;top:468px;transform:scaleX(0.8300);color:#ffffff;">7,99</span>
<span class="tb" style="left:205.30px;top:630px;transform:scaleX(0.9530);">1 Iten(s)</span>
<span class="tb" style="left:773.50px;top:630px;transform:scaleX(0.7746);">1</span>
<span class="tb" style="left:1104.60px;top:630px;transform:scaleX(0.9881);">7,99</span>
<span class="tb" style="left:1168.50px;top:630px;transform:scaleX(0.9881);">0,00</span>
<span class="tb" style="left:1231.40px;top:630px;transform:scaleX(0.9881);">0,00</span>
<span class="tb" style="left:1310.20px;top:630px;transform:scaleX(0.9881);">7,99</span>
<span class="t" style="left:1167.00px;top:668px;transform:scaleX(0.7781);">Confirmar</span>
<span class="t" style="left:1282.80px;top:668px;transform:scaleX(0.8132);">Sair</span>
</div>
</div></body></html>
